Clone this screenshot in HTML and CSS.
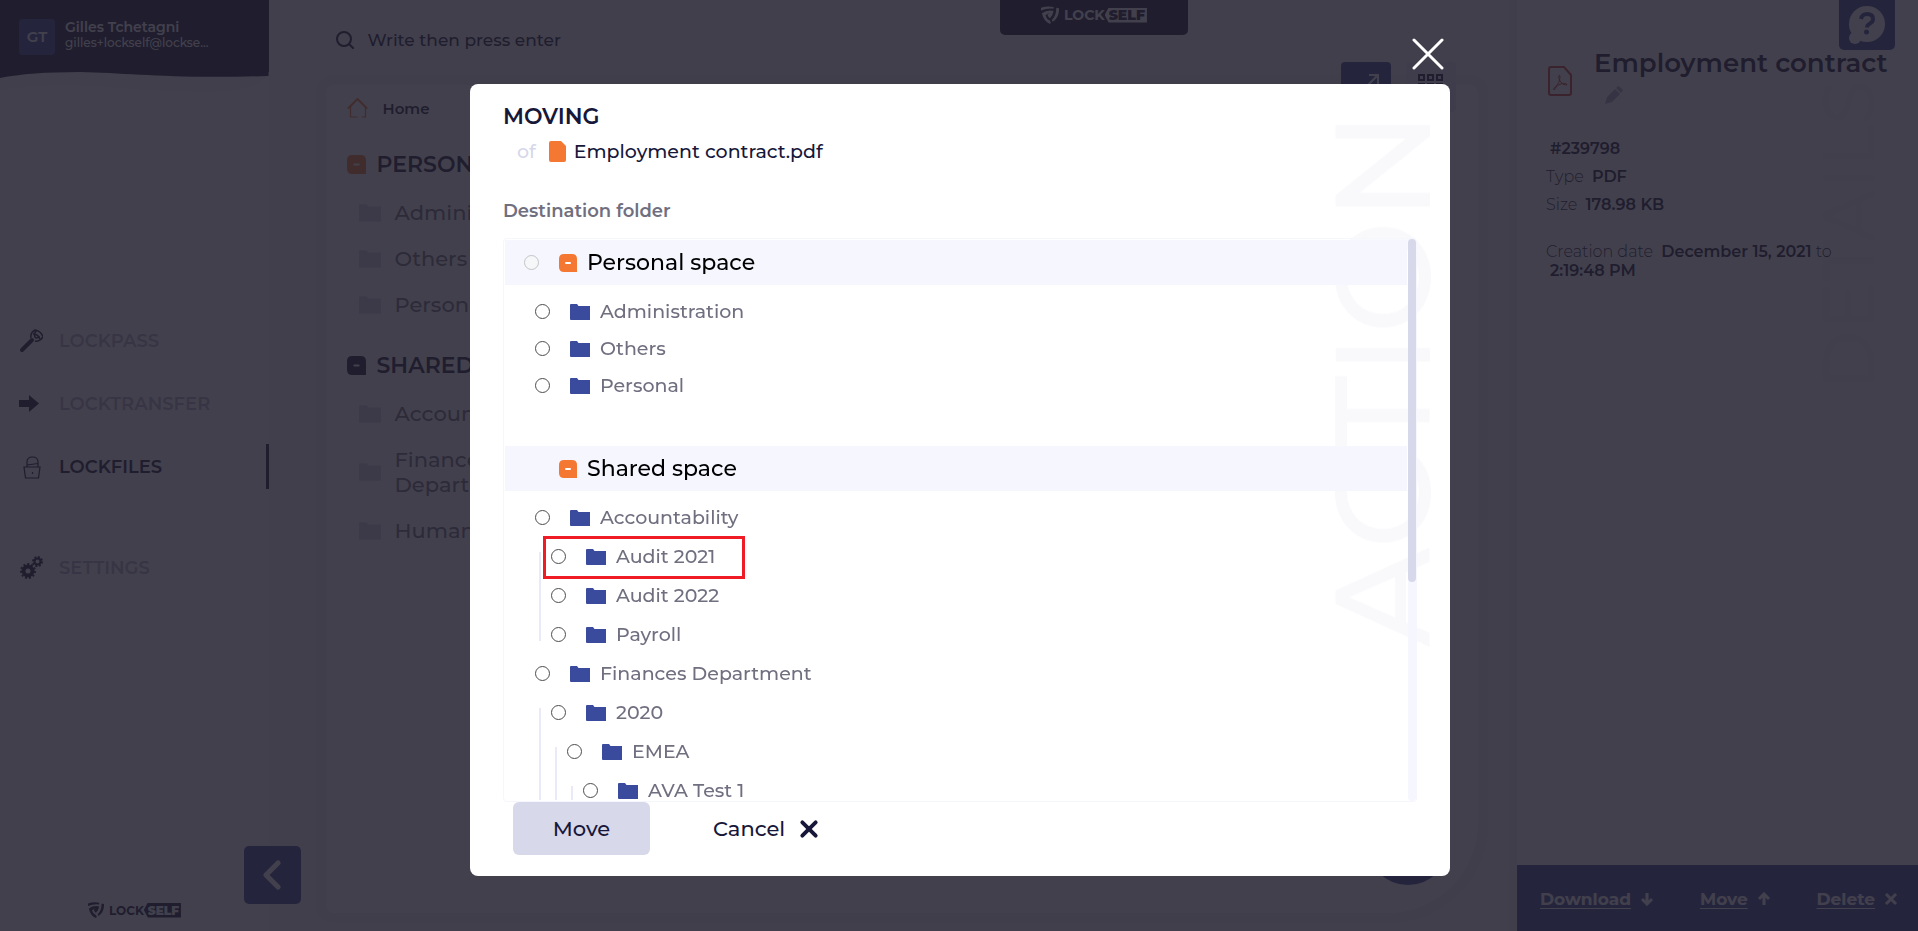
FILE: index.html
```html
<!DOCTYPE html>
<html lang="en">
  <head>
    <meta charset="UTF-8" />
    <meta name="viewport" content="width=device-width, initial-scale=1.0" />
    <title>LockFiles - Moving</title>
    <link rel="stylesheet" href="styles.css">
  </head>
  <body>
    <!-- shared icons -->
    <svg class="sprite" aria-hidden="true">
      <symbol id="folder" viewBox="0 0 20 16"><path d="M1 0h6l1.500 2H20v14H1q-1 0-1-1V1q0-1 1-1z" fill="currentColor" /></symbol>
      <symbol id="minus" viewBox="0 0 18 18"><path d="M5 0h8q5 0 5 5v13H5q-5 0-5-5V5q0-5 5-5z" fill="currentColor" /><rect x="6" y="8" width="6" height="2" rx="1" fill="#fff" /></symbol>
      <symbol id="cross" viewBox="0 0 18 18"><path d="M3 3l12 12M15 3L3 15" stroke="currentColor" stroke-width="3.500" stroke-linecap="round" /></symbol>
      <symbol id="shield" viewBox="0 0 20 20">
        <path d="M0 2Q7-.5 14 1v2Q7 2 0 5zM1 8q6-4 13-2.500-1 5-4 8-2-1-3-4l3-1.500q-3 0-5 2.500 1 4 5 6l1 2-1 1.500Q3 17 1 8zM17 2l3 .5q.5 10-7 15l-1-2Q17 11 17 2z" fill="currentColor" />
      </symbol>
    </svg>

    <div class="app">
      <aside class="sidebar">
        <div class="user">
          <span class="avatar">GT</span>
          <div class="user-text">
            <strong>Gilles Tchetagni</strong>
            <span>gilles+lockself@lockse...</span>
          </div>
        </div>
        <svg class="wave" viewBox="0 0 269 24" preserveAspectRatio="none">
          <path d="M0 19Q45 10 100 15T210 20T269 0H0z" fill="#f9f9fc" />
          <path d="M0 6Q30 0 80 0C130 1 170 7 269 4V0H0z" fill="#17173a" />
        </svg>
        <nav class="menu">
          <a href="#">
            <svg viewBox="0 0 24 24"><path d="M3 21L13 11" stroke="currentColor" stroke-width="4" stroke-linecap="round" /><path d="M12 9q-1-5 4-8 6 1 8 7-4 5-8 4M14 5q5 0 7 5M17 2q-3 5 0 7l4-1" fill="none" stroke="currentColor" stroke-width="1.500" /></svg>
            LOCKPASS
          </a>
          <a href="#">
            <svg viewBox="0 0 24 24"><path d="M0 8h10V3l10 8.500-10 8.500v-5H0z" fill="currentColor" /></svg>
            LOCKTRANSFER
          </a>
          <a href="#" class="active">
            <svg viewBox="0 0 24 24"><path d="M5 12h16l-1.500 11h-13zM8 12V7q0-5 5.500-5T19 7v5M8 10l11-1.500M13.500 17v2" fill="none" stroke="currentColor" stroke-width="1.200" /></svg>
            LOCKFILES
          </a>
          <a href="#" class="settings">
            <svg viewBox="0 0 24 24" fill="none" stroke="currentColor"><circle cx="9" cy="15" r="4.500" stroke-width="4" /><circle cx="9" cy="15" r="7" stroke-width="2" stroke-dasharray="2 2" /><circle cx="18.500" cy="5.500" r="3" stroke-width="2" /><circle cx="18.500" cy="5.500" r="4.500" stroke-width="2" stroke-dasharray="2 1.500" /></svg>
            SETTINGS
          </a>
        </nav>
        <div class="logo">
          <svg><use href="#shield" /></svg>
          <span>LOCK</span><b>SELF</b>
        </div>
        <button class="collapse" aria-label="Collapse menu">
          <svg viewBox="0 0 18 30"><path d="M15 3L3 15l12 12" fill="none" stroke="#fff" stroke-width="5" stroke-linecap="round" stroke-linejoin="round" /></svg>
        </button>
      </aside>

      <main class="main">
        <span class="big-title" aria-hidden="true">LOCKFILES</span>
        <label class="search">
          <svg viewBox="0 0 18 18"><path d="M13 13l4 4" stroke="#17173a" stroke-width="2" stroke-linecap="round" /><circle cx="8" cy="8" r="7" fill="none" stroke="#17173a" stroke-width="2" /></svg>
          <input type="text" placeholder="Write then press enter" />
        </label>
        <div class="view-buttons">
          <button class="open" aria-label="Open">
            <svg viewBox="0 0 12 12"><path d="M1 11L11 1M2 1h9v9" fill="none" stroke="#fff" stroke-width="2" /></svg>
          </button>
          <button class="grid" aria-label="Grid view">
            <svg viewBox="0 0 26 26"><path d="M1 1h5v5H1zM10 1h5v5h-5zM19 1h5v5h-5zM1 10h5v5H1zM10 10h5v5h-5zM19 10h5v5h-5zM1 19h5v5H1zM10 19h5v5h-5zM19 19h5v5h-5z" fill="none" stroke="#17173a" stroke-width="2" /></svg>
          </button>
        </div>
        <section class="panel">
          <a href="#" class="crumb">
            <svg viewBox="0 0 20 20"><path d="M1 10l9-9 9 9" fill="none" stroke="#f47732" stroke-width="2" stroke-linecap="round" /><path d="M3 8v11h7M14 19h4V8" fill="none" stroke="#f47732" stroke-width="1.200" /></svg>
            Home
          </a>
          <div class="folders">
            <h3><svg class="orange"><use href="#minus" /></svg>PERSONAL</h3>
            <a href="#"><svg><use href="#folder" /></svg>Administration</a>
            <a href="#"><svg><use href="#folder" /></svg>Others</a>
            <a href="#"><svg><use href="#folder" /></svg>Personal</a>
            <h3 class="shared"><svg><use href="#minus" /></svg>SHARED</h3>
            <a href="#"><svg><use href="#folder" /></svg>Accountability</a>
            <a href="#"><svg><use href="#folder" /></svg>Finances Department</a>
            <a href="#"><svg><use href="#folder" /></svg>Human</a>
          </div>
          <button class="add" aria-label="Add"></button>
        </section>
      </main>

      <aside class="details">
        <span class="side-title" aria-hidden="true">DETAILS</span>
        <header>
          <svg class="pdf" viewBox="0 0 24 30" fill="none" stroke="#c9402f"><path d="M3 1h13l7 8v18q0 2-2 2H3q-2 0-2-2V3q0-2 2-2z" stroke-width="2" /><path d="M6 24q-2-1 2-3.500 4-4 4-9 0-3-1-2-1 2 1 5.500 3 5 7 4 0-2-5-1.500-5 .5-8 6.500z" /></svg>
          <div>
            <h2>Employment contract</h2>
            <button class="edit" aria-label="Rename">
              <svg viewBox="0 0 18 18"><path d="M0 18l2-7 8-8 5 5-8 8zM11 2l2-2q1 0 5 4l-2 3z" fill="#a9aac8" /></svg>
            </button>
          </div>
        </header>
        <div class="info">
          <p><b>#239798</b></p>
          <p>Type <b>PDF</b></p>
          <p>Size <b>178.98 KB</b></p>
          <p class="created">Creation date <b>December 15, 2021</b> to<br /><b>2:19:48 PM</b></p>
        </div>
        <footer>
          <a href="#"><span>Download</span><svg viewBox="0 0 14 14"><path d="M7 1v11M2 7l5 5 5-5" /></svg></a>
          <a href="#"><span>Move</span><svg viewBox="0 0 14 14"><path d="M7 13V2M2 7l5-5 5 5" /></svg></a>
          <a href="#"><span>Delete</span><svg viewBox="0 0 14 14"><path d="M2 2l10 10M12 2L2 12" /></svg></a>
        </footer>
      </aside>

      <div class="brand-tab">
        <div class="logo light">
          <svg><use href="#shield" /></svg>
          <span>LOCK</span><b>SELF</b>
        </div>
      </div>
      <button class="help" aria-label="Help">
        <svg viewBox="0 0 36 38"><circle cx="18" cy="18" r="18" fill="#fff" /><circle cx="6" cy="32" r="6" fill="#fff" /><path d="M12 13q1-5 6-5 6 0 6 5 0 3-3 4.500t-3 4" fill="none" stroke="#3a4a9d" stroke-width="4" /><circle cx="17.500" cy="26" r="2.500" fill="#3a4a9d" /></svg>
      </button>
    </div>

    <div class="overlay">
      <div class="modal" role="dialog" aria-labelledby="title">
        <button class="close" aria-label="Close">
          <svg viewBox="0 0 32 32"><path d="M2 2l28 28M30 2L2 30" stroke="#fff" stroke-width="3" stroke-linecap="round" /></svg>
        </button>
        <span class="watermark" aria-hidden="true">ACTION</span>
        <h1 id="title">MOVING</h1>
        <p class="subject">
          <span>of</span>
          <svg viewBox="0 0 17 21"><path d="M2 0h10l5 5v14q0 2-2 2H2q-2 0-2-2V2q0-2 2-2z" fill="#f47732" /></svg>
          Employment contract.pdf
        </p>
        <form>
          <p class="field-label">Destination folder</p>
          <div class="tree-box">
            <div class="tree">
              <label class="space"><input type="radio" name="folder" disabled /><svg><use href="#minus" /></svg>Personal space</label>
              <ul class="root compact">
                <li><label><input type="radio" name="folder" /><svg><use href="#folder" /></svg>Administration</label></li>
                <li><label><input type="radio" name="folder" /><svg><use href="#folder" /></svg>Others</label></li>
                <li><label><input type="radio" name="folder" /><svg><use href="#folder" /></svg>Personal</label></li>
              </ul>
              <div class="space no-radio"><svg><use href="#minus" /></svg>Shared space</div>
              <ul class="root">
                <li>
                  <label><input type="radio" name="folder" /><svg><use href="#folder" /></svg>Accountability</label>
                  <ul>
                    <li class="marked"><label><input type="radio" name="folder" /><svg><use href="#folder" /></svg>Audit 2021</label></li>
                    <li><label><input type="radio" name="folder" /><svg><use href="#folder" /></svg>Audit 2022</label></li>
                    <li><label><input type="radio" name="folder" /><svg><use href="#folder" /></svg>Payroll</label></li>
                  </ul>
                </li>
                <li>
                  <label><input type="radio" name="folder" /><svg><use href="#folder" /></svg>Finances Department</label>
                  <ul>
                    <li>
                      <label><input type="radio" name="folder" /><svg><use href="#folder" /></svg>2020</label>
                      <ul>
                        <li>
                          <label><input type="radio" name="folder" /><svg><use href="#folder" /></svg>EMEA</label>
                          <ul>
                            <li><label><input type="radio" name="folder" /><svg><use href="#folder" /></svg>AVA Test 1</label></li>
                          </ul>
                        </li>
                      </ul>
                    </li>
                  </ul>
                </li>
              </ul>
            </div>
            <div class="scrollbar"><div class="thumb"></div></div>
          </div>
          <div class="actions">
            <button type="submit" class="move">Move</button>
            <button type="button" class="cancel">Cancel <svg><use href="#cross" /></svg></button>
          </div>
        </form>
      </div>
    </div>
  </body>
</html>
```

FILE: styles.css
```css
*,
*::before,
*::after {
  box-sizing: border-box;
}

body {
  margin: 0;
  font-family: Montserrat, Inter, sans-serif;
  font-weight: 500;
  color: #17173a;
}

h1, h2, h3, p, ul {
  margin: 0;
  padding: 0;
}

a {
  color: inherit;
  text-decoration: none;
}

button {
  border: none;
  padding: 0;
  font: inherit;
  color: inherit;
  background: none;
  cursor: pointer;
}

svg {
  flex: none;
}

.sprite {
  display: none;
}

.app {
  position: relative;
  display: grid;
  grid-template-columns: 14% 1fr 401px;
  height: 100vh;
  overflow: hidden;
  background-color: #f3f3f9;
}

/* sidebar */
.sidebar {
  position: relative;
  z-index: 1;
  display: flex;
  flex-direction: column;
  background-color: #fff;
}

.user {
  display: flex;
  align-items: center;
  gap: 10px;
  height: 72px;
  padding: 2px 19px 0;
  background-color: #17173a;
  color: #fff;
}

.avatar {
  width: 36px;
  line-height: 36px;
  border-radius: 4px;
  background-color: #3a4a9d;
  text-align: center;
  font-size: 15px;
  font-weight: 600;
}

.user-text {
  display: flex;
  flex-direction: column;
  font-size: 12px;
  line-height: 16px;
  padding-bottom: 5px;
}

.user-text strong {
  font-size: 14px;
  font-weight: 600;
}

.wave {
  width: 100%;
  height: 24px;
}

.menu {
  display: flex;
  flex-direction: column;
  gap: 18px;
  margin-top: 222px;
}

.menu a {
  display: flex;
  align-items: center;
  gap: 16px;
  height: 45px;
  margin-left: 5px;
  padding-left: 14px;
  border-right: 3px solid transparent;
  color: #b4b5cc;
  font-size: 18px;
  font-weight: 600;
}

.menu svg {
  width: 24px;
  height: 24px;
  color: #17173a;
}

.menu .active {
  color: #17173a;
  background-color: #fafafd;
  border-color: #17173a;
}

.menu .settings {
  margin-top: 38px;
}

.logo {
  display: flex;
  align-items: center;
  margin: auto 0 13px 88px;
  font-size: 12px;
  font-weight: 700;
  line-height: 15px;
}

.logo svg {
  width: 16px;
  height: 16px;
  margin-right: 5px;
}

.logo b {
  padding: 0 2px 0 4px;
  background-color: #17173a;
  color: #fff;
  clip-path: polygon(4px 0, 100% 0, 100% 100%, 4px 100%, 0 50%);
}

.logo.light {
  margin: 0;
  color: #fff;
  font-size: 14px;
}

.logo.light svg {
  width: 18px;
  height: 18px;
}

.logo.light b {
  background-color: #fff;
  color: #17173a;
}

.collapse {
  position: absolute;
  right: -32px;
  bottom: 27px;
  width: 57px;
  height: 58px;
  border-radius: 5px;
  background-color: #3a4a9d;
}

.collapse svg {
  width: 18px;
  height: 30px;
  display: block;
  margin: auto;
}

/* main area */
.main {
  position: relative;
  display: flex;
  flex-direction: column;
  padding: 0 39px 18px 57px;
}

.big-title {
  position: absolute;
  top: -36px;
  left: 0;
  font-size: 150px;
  color: #f7f7fb;
}

.search {
  position: relative;
  display: flex;
  align-items: center;
  gap: 12px;
  height: 80px;
  margin: 0 0 5px 10px;
}

.search svg {
  width: 18px;
  height: 18px;
}

.search input {
  border: none;
  background: none;
  width: 300px;
  font: inherit;
  font-size: 17px;
}

.search input::placeholder {
  color: #17173a;
}

.view-buttons {
  position: absolute;
  top: 62px;
  right: 61px;
  z-index: 1;
  display: flex;
  gap: 15px;
}

.view-buttons button {
  display: flex;
  justify-content: center;
  width: 50px;
  height: 50px;
  padding-top: 12px;
  border-radius: 4px;
  background-color: #e6e7f3;
}

.view-buttons .open {
  padding-left: 14px;
  background-color: #3a4a9d;
}

.open svg {
  width: 12px;
  height: 12px;
}

.grid svg {
  width: 26px;
  height: 26px;
}

.panel {
  position: relative;
  flex: 1;
  border-radius: 8px 8px 90px 8px;
  background-color: #fff;
  box-shadow: 0 0 0 10px #efeff7;
}

.crumb {
  display: flex;
  align-items: center;
  gap: 15px;
  height: 46px;
  padding-left: 21px;
  font-size: 15px;
  font-weight: 600;
}

.crumb svg {
  width: 21px;
  height: 20px;
}

.folders {
  width: 190px;
  padding: 14px 0 0 21px;
}

.folders h3 {
  display: flex;
  align-items: center;
  gap: 11px;
  height: 38px;
  margin-bottom: 6px;
  font-size: 22px;
  font-weight: 600;
}

.folders h3 svg {
  width: 19px;
  height: 19px;
}

.folders .orange {
  color: #f47732;
}

.folders .shared {
  margin-top: 19px;
}

.folders a {
  display: flex;
  align-items: center;
  gap: 14px;
  min-height: 46px;
  padding: 11px 0 10px 12px;
  color: #706f80;
  font-size: 21px;
  line-height: 25px;
}

.folders a svg {
  width: 22px;
  height: 18px;
  color: #d6d7ea;
}

.add {
  position: absolute;
  right: 29px;
  bottom: 28px;
  width: 82px;
  height: 82px;
  border-radius: 50%;
  background-color: #3a4a9d;
}

/* details column */
.details {
  position: relative;
  display: flex;
  flex-direction: column;
  background-color: #fff;
  box-shadow: 0 0 0 8px #efeff7;
}

.side-title,
.watermark {
  position: absolute;
  writing-mode: vertical-rl;
  transform: rotate(180deg);
  line-height: 1;
  color: #f9f9fc;
}

.side-title {
  top: 80px;
  right: 34px;
  font-size: 72px;
}

.details header {
  position: relative;
  display: flex;
  gap: 22px;
  padding: 48px 0 0 31px;
}

.pdf {
  width: 24px;
  height: 30px;
  margin-top: 18px;
}

.details h2 {
  font-size: 26px;
  font-weight: 600;
  line-height: 30px;
}

.edit {
  display: block;
  margin: 8px 11px;
}

.edit svg {
  display: block;
  width: 18px;
  height: 18px;
}

.info {
  position: relative;
  margin-top: 27px;
  padding-left: 29px;
  font-size: 16px;
  font-weight: 300;
  line-height: 19px;
}

.info p {
  margin-bottom: 9px;
}

.info b {
  margin-left: 4px;
  font-weight: 600;
}

.info .created {
  margin-top: 28px;
}

.details footer {
  display: flex;
  align-items: center;
  justify-content: space-between;
  height: 66px;
  margin-top: auto;
  padding: 2px 20px 0 23px;
  background-color: #3a4a9d;
  color: #fff;
  font-size: 17px;
  font-weight: 700;
}

.details footer a {
  display: flex;
  align-items: center;
  gap: 9px;
}

.details footer span {
  text-decoration: underline;
  text-underline-offset: 3px;
}

.details footer svg {
  width: 14px;
  height: 14px;
  fill: none;
  stroke: #fff;
  stroke-width: 3;
}

.brand-tab {
  position: absolute;
  z-index: 1;
  top: 0;
  left: 1000px;
  display: flex;
  align-items: center;
  justify-content: center;
  width: 188px;
  height: 35px;
  padding-bottom: 5px;
  border-radius: 0 0 5px 5px;
  background-color: #17173a;
}

.help {
  position: absolute;
  z-index: 1;
  top: 0;
  right: 23px;
  width: 56px;
  height: 50px;
  border-radius: 0 0 5px 5px;
  background-color: #3a4a9d;
}

.help svg {
  display: block;
  width: 36px;
  height: 38px;
  margin: 0 auto;
}

/* modal */
.overlay {
  position: fixed;
  inset: 0;
  z-index: 10;
  display: flex;
  align-items: flex-start;
  justify-content: center;
  padding: 84px 0 0 2px;
  background-color: rgba(33, 31, 45, 0.85);
}

.modal {
  position: relative;
  width: 980px;
  padding: 19px 33px 21px;
  border-radius: 8px;
  background-color: #fff;
}

.close {
  position: absolute;
  top: -46px;
  right: 6px;
}

.close svg {
  display: block;
  width: 32px;
  height: 32px;
}

.watermark {
  top: 27px;
  right: 1px;
  font-size: 135px;
}

.modal h1 {
  font-size: 22px;
  font-weight: 600;
  line-height: 28px;
}

.subject {
  display: flex;
  align-items: center;
  gap: 8px;
  height: 41px;
  padding-left: 14px;
  font-size: 19px;
}

.subject span {
  margin-right: 5px;
  color: #d6d7ea;
}

.subject svg {
  width: 17px;
  height: 21px;
}

.field-label {
  margin-top: 27px;
  padding-bottom: 15px;
  color: #706f80;
  font-size: 18px;
  font-weight: 600;
  line-height: 24px;
}

.tree-box {
  position: relative;
  display: flex;
  gap: 1px;
  height: 564px;
  border: 1px solid #f5f6fe;
  border-radius: 4px;
}

.tree {
  flex: 1;
  margin: 1px 0 1px 1px;
  overflow-y: auto;
  scrollbar-width: none;
  color: #706f80;
  font-size: 19px;
}

.scrollbar {
  width: 8px;
  border-radius: 4px;
  background-color: #f5f6fe;
}

.thumb {
  height: 61%;
  border-radius: 4px;
  background-color: #d7d8ea;
}

.tree ul {
  list-style: none;
}

.tree label,
.space {
  display: flex;
  align-items: center;
  gap: 10px;
  height: 39px;
}

.tree input {
  appearance: none;
  width: 15px;
  height: 15px;
  margin: 0 10px 0 0;
  border: 1px solid #4c4c4c;
  border-radius: 50%;
  background-color: #fff;
}

.tree input:checked {
  border: 5px solid #3a4a9d;
}

.tree input:disabled {
  border-color: #c4c4c8;
  background-color: #f6f7f8;
}

.tree label svg {
  width: 20px;
  height: 16px;
  color: #3a4a9d;
}

.tree .space {
  height: 45px;
  padding-left: 19px;
  background-color: #f5f6fe;
  color: #000;
  font-size: 22px;
}

.tree .space svg {
  width: 18px;
  height: 18px;
  color: #f47732;
}

.tree .no-radio {
  padding-left: 54px;
}

.tree .root {
  padding: 7px 0 134px 30px;
}

.tree .compact {
  padding: 8px 0 42px 30px;
}

.compact label {
  height: 37px;
}

/* guide line next to the sub folders */
.root ul {
  position: relative;
  padding-left: 16px;
}

.root ul::before {
  content: "";
  position: absolute;
  left: 4px;
  top: 15px;
  bottom: 13px;
  width: 2px;
  background-color: #e9e9f7;
}

.root ul ul::before,
.root li:last-child > ul::before {
  bottom: 0;
}

.marked {
  position: relative;
}

.marked::after {
  content: "";
  position: absolute;
  top: -1px;
  left: -8px;
  width: 202px;
  height: 43px;
  border: 3px solid #ef1c25;
}

.actions {
  display: flex;
  gap: 63px;
  padding: 0 10px;
  font-size: 21px;
}

.move {
  width: 137px;
  height: 53px;
  border-radius: 6px;
  background-color: #d7d8ea;
}

.cancel {
  display: flex;
  align-items: center;
  gap: 14px;
}

.cancel svg {
  width: 20px;
  height: 20px;
}
```
